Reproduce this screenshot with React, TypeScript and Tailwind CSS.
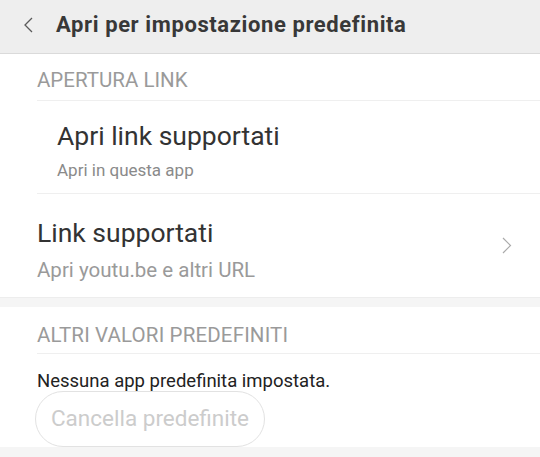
import React from "react";

export default function App() {
  return (
    <div className="w-[540px] h-[457px] overflow-hidden bg-white font-['Roboto',sans-serif]">
      {/* Toolbar */}
      <div className="h-[54px] bg-[#eeeeee] border-b border-[#dadada] flex items-center">
        <svg className="ml-[22px] w-[12px] h-[16px] mb-[3px]" viewBox="0 0 12 16" fill="none">
          <path d="M10 1 L3 8 L10 15" stroke="#5a5a5a" strokeWidth="1.3" />
        </svg>
        <h1 className="ml-[22px] mb-[3px] text-[22px] leading-[26px] font-bold text-[#383838] tracking-[0.6px]">
          Apri per impostazione predefinita
        </h1>
      </div>

      {/* Link opening section */}
      <div className="h-[46px] pt-[13px] pl-[37px] text-[20.5px] leading-[26px] text-[#9a9a9a]">APERTURA LINK</div>
      <div className="ml-[37px] h-px bg-[#efefef]" />

      <div className="h-[92px] pt-[19px] pl-[57px] flex flex-col">
        <span className="text-[26.5px] text-[#333] leading-[32px]">Apri link supportati</span>
        <span className="text-[17px] text-[#8a8a8a] leading-[22px] mt-[7px]">Apri in questa app</span>
      </div>
      <div className="ml-[37px] h-px bg-[#efefef]" />

      <div className="h-[103px] flex pl-[37px] pr-[28px]">
        <div className="flex-1 flex flex-col pt-[23px]">
          <span className="text-[26.5px] text-[#333] leading-[32px]">Link supportati</span>
          <span className="text-[20.5px] text-[#9a9a9a] leading-[26px] mt-[8px]">Apri youtu.be e altri URL</span>
        </div>
        <svg className="w-[10px] h-[17px] mt-[43px]" viewBox="0 0 10 17" fill="none">
          <path d="M1 1 L8.5 8.5 L1 16" stroke="#aaa" strokeWidth="1.2" />
        </svg>
      </div>

      <div className="h-[10px] bg-[#f5f5f5] border-t border-[#ededed]" />

      {/* Other defaults */}
      <div className="h-[46px] pt-[15px] pl-[37px] text-[20.5px] leading-[26px] text-[#9a9a9a] tracking-[0.15px]">
        ALTRI VALORI PREDEFINITI
      </div>
      <div className="ml-[37px] h-px bg-[#efefef]" />

      <div className="pl-[37px] pt-[17px] text-[18.5px] text-[#222] leading-[20px]">Nessuna app predefinita impostata.</div>
      <div className="pl-[35px]">
        <button className="w-[230px] h-[56px] rounded-full border border-[#e2e2e2] text-[22.5px] text-[#cccccc] bg-white">
          Cancella predefinite
        </button>
      </div>
      <div className="h-[20px] bg-[#f5f5f5]" />
    </div>
  );
}
